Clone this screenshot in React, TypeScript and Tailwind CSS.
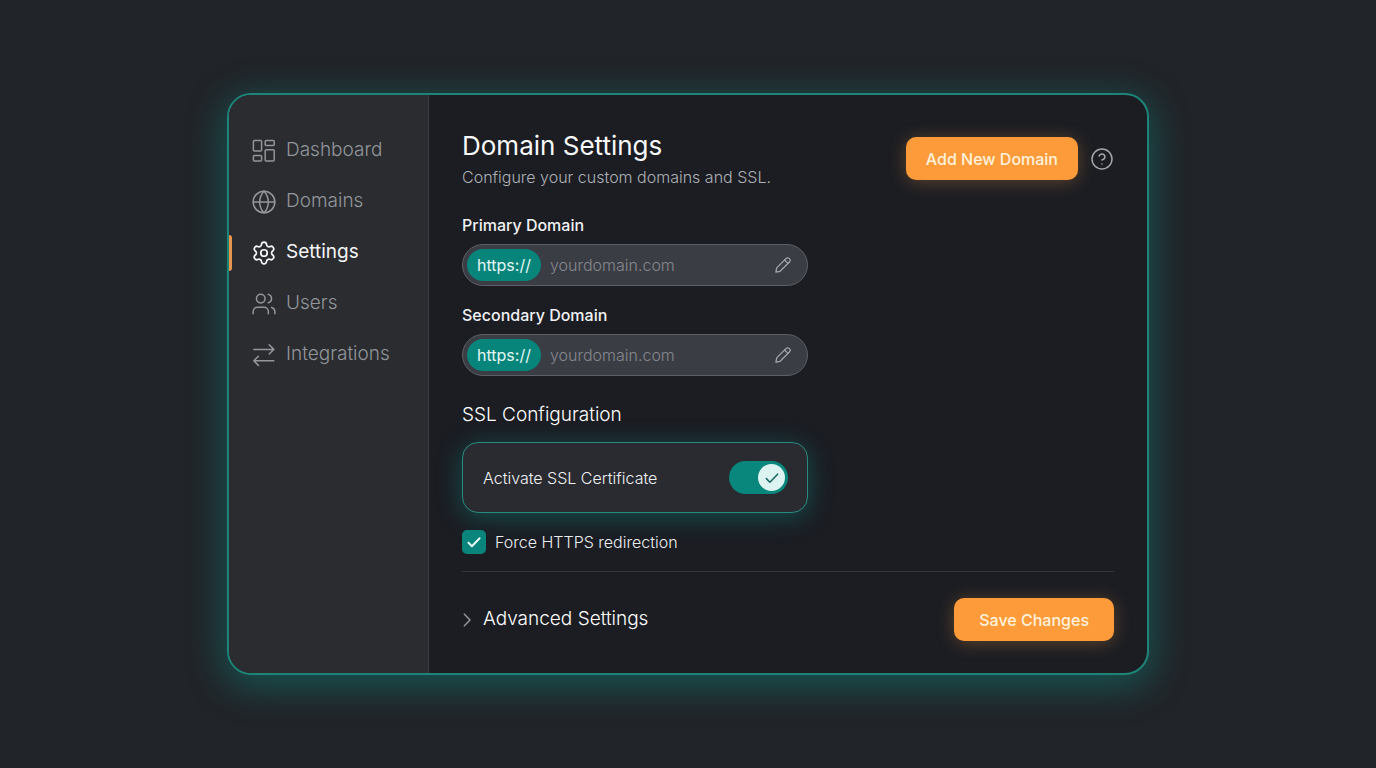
import { useState, type ReactNode } from "react";
import { CircleHelp, Globe, Settings, Users } from "lucide-react";

interface IconProps {
  className?: string;
}

function DashboardIcon({ className }: IconProps) {
  return (
    <svg viewBox="0 0 26 26" fill="none" stroke="currentColor" strokeWidth={1.5} className={className} aria-hidden="true">
      <rect x="2.4" y="2.4" width="8.2" height="10.6" rx="1" />
      <rect x="14.2" y="2.4" width="9" height="5.2" rx="1" />
      <rect x="14.2" y="11.8" width="9" height="11.2" rx="1" />
      <rect x="2.4" y="17.4" width="8.2" height="5.6" rx="1" />
    </svg>
  );
}

function TransferIcon({ className }: IconProps) {
  return (
    <svg
      viewBox="0 0 26 26"
      fill="none"
      stroke="currentColor"
      strokeWidth={1.5}
      strokeLinecap="round"
      strokeLinejoin="round"
      className={className}
      aria-hidden="true"
    >
      <path d="M2.8 7.4h20M18.2 2.8l4.6 4.6-4.6 4.6" />
      <path d="M22.8 18.8h-20M7.4 14.2l-4.6 4.6 4.6 4.6" />
    </svg>
  );
}

function PencilIcon({ className }: IconProps) {
  return (
    <svg
      viewBox="0 0 18 18"
      fill="none"
      stroke="currentColor"
      strokeWidth={1.3}
      strokeLinecap="round"
      strokeLinejoin="round"
      className={className}
      aria-hidden="true"
    >
      <path d="M1.9 16.1l.8-4.2L12.2 2.4a2.05 2.05 0 0 1 2.9 0l.5.5a2.05 2.05 0 0 1 0 2.900L6.1 15.300z" />
      <path d="M10.6 4l3.4 3.4" />
    </svg>
  );
}

function CheckIcon({ className }: IconProps) {
  return (
    <svg
      viewBox="0 0 16 16"
      fill="none"
      stroke="currentColor"
      strokeLinecap="round"
      strokeLinejoin="round"
      className={className}
      aria-hidden="true"
    >
      <path d="M2.4 8.6l3.5 3.6 7.7-8" />
    </svg>
  );
}

const navItems = [
  { label: "Dashboard", icon: <DashboardIcon className="size-[26px]" /> },
  { label: "Domains", icon: <Globe className="size-[26px]" strokeWidth={1.4} /> },
  { label: "Settings", icon: <Settings className="size-[26px]" strokeWidth={1.6} />, active: true },
  { label: "Users", icon: <Users className="size-[26px]" strokeWidth={1.4} /> },
  { label: "Integrations", icon: <TransferIcon className="size-[26px]" /> },
];

interface DomainFieldProps {
  id: string;
  label: string;
}

function DomainField({ id, label }: DomainFieldProps) {
  const [value, setValue] = useState("");

  return (
    <div className="flex flex-col gap-[7px]">
      <label htmlFor={id} className="text-base leading-6 font-medium text-[#f1f2f4]">
        {label}
      </label>

      <div className="flex h-[42px] items-center rounded-full border border-[#5c5f66] bg-[#3b3d45] pr-[15px] pl-1">
        <span className="flex h-8 items-center rounded-full bg-[#07857b] px-[10px] text-base text-[#e6f6f4]">
          https://
        </span>
        <input
          id={id}
          type="text"
          value={value}
          onChange={(e) => setValue(e.target.value)}
          placeholder="yourdomain.com"
          className="min-w-0 flex-1 bg-transparent px-[9px] text-base font-light text-white outline-none placeholder:text-[#85878e]"
        />
        <button type="button" aria-label={"Edit " + label} className="text-[#a3a5ab]">
          <PencilIcon className="size-[18px]" />
        </button>
      </div>
    </div>
  );
}

interface PrimaryButtonProps {
  children: ReactNode;
  wide?: boolean;
}

function PrimaryButton({ children, wide }: PrimaryButtonProps) {
  return (
    <button
      type="button"
      className={
        "h-[43px] rounded-[10px] bg-[#fd9a3a] text-base font-medium text-[#fff3dc] shadow-[0_2px_18px_rgba(253,154,58,0.3)] transition hover:bg-[#ffa54e] " +
        (wide ? "px-[25px]" : "px-5")
      }
    >
      {children}
    </button>
  );
}

export default function App() {
  const [ssl, setSsl] = useState(true);
  const [force, setForce] = useState(true);

  return (
    <div className="flex min-h-screen items-center justify-center bg-[#212429] p-6 font-['Inter','Liberation_Sans',sans-serif]">
      <div className="flex w-full max-w-[922px] overflow-hidden rounded-3xl border-2 border-[#1f8478] bg-[#1b1d23] shadow-[0_8px_36px_4px_rgba(13,148,136,0.42)]">

        {/* Sidebar */}
        <nav className="w-[200px] shrink-0 border-r border-[#3a3d42] bg-[#2a2c30] pt-[30px]">
          <ul>
            {navItems.map((item) => (
              <li key={item.label} className="flex h-[51px] items-center">
                <span className={item.active ? "h-9 w-[3px] rounded-r-sm bg-[#e8964a]" : "h-9 w-[3px]"} />
                <a
                  href="#"
                  aria-current={item.active ? "page" : undefined}
                  className={
                    item.active
                      ? "flex items-center gap-[9px] pl-[19px] text-[19px] text-[#f5f6f7]"
                      : "flex items-center gap-[9px] pl-[19px] text-[19px] font-light text-[#92959a] hover:text-white"
                  }
                >
                  {item.icon}
                  {item.label}
                </a>
              </li>
            ))}
          </ul>
        </nav>

        <main className="min-w-0 flex-1 px-[33px] pt-[35px] pb-8">

          {/* Header */}
          <header className="flex items-start justify-between">
            <div>
              <h1 className="text-[26px] leading-8 text-[#f7f8f9]">Domain Settings</h1>
              <p className="mt-[3px] text-base leading-6 font-light text-[#aeb1b6]">
                Configure your custom domains and SSL.
              </p>
            </div>

            <div className="mt-[7px] flex items-center gap-3">
              <PrimaryButton>Add New Domain</PrimaryButton>
              <button type="button" aria-label="Help" className="text-[#a3a5aa]">
                <CircleHelp className="size-6" strokeWidth={1.5} />
              </button>
            </div>
          </header>

          {/* Domains */}
          <div className="mt-6 flex max-w-[346px] flex-col gap-[17px]">
            <DomainField id="primary-domain" label="Primary Domain" />
            <DomainField id="secondary-domain" label="Secondary Domain" />
          </div>

          {/* SSL */}
          <section className="mt-[25px] max-w-[346px]">
            <h2 className="text-[19px] leading-7 font-light text-white">SSL Configuration</h2>

            <label className="mt-[13px] flex h-[71px] items-center justify-between rounded-2xl border border-[#2a8a7f] bg-[#292b30] pr-[19px] pl-5 text-base font-light text-[#f0f1f3] shadow-[0_4px_24px_rgba(13,148,136,0.42)]">
              Activate SSL Certificate
              <span className="relative flex">
                <input
                  type="checkbox"
                  role="switch"
                  checked={ssl}
                  onChange={(e) => setSsl(e.target.checked)}
                  className="peer h-[33px] w-[59px] appearance-none rounded-full bg-[#4a4d54] checked:bg-[#0a877c]"
                />
                <span className="pointer-events-none absolute top-[3px] left-[3px] flex size-[27px] items-center justify-center rounded-full bg-[#dcf3f1] text-[#1c6a63] peer-checked:left-[29px]">
                  {ssl && <CheckIcon className="size-4 stroke-[1.6]" />}
                </span>
              </span>
            </label>

            <label className="mt-[17px] flex items-center gap-[9px] text-base font-light text-[#ebedf0]">
              <span className="relative flex">
                <input
                  type="checkbox"
                  checked={force}
                  onChange={(e) => setForce(e.target.checked)}
                  className="size-6 appearance-none rounded-[5px] bg-[#4a4d54] checked:bg-[#0a857b]"
                />
                {force && (
                  <CheckIcon className="pointer-events-none absolute top-1 left-1 size-4 stroke-2 text-[#e9faf8]" />
                )}
              </span>
              Force HTTPS redirection
            </label>
          </section>

          {/* Footer */}
          <div className="mt-[17px] flex items-center justify-between border-t border-[#32353b] pt-[26px]">
            <button type="button" className="flex items-center gap-[11px] text-[19px] font-light text-white">
              <svg viewBox="0 0 10 16" fill="none" stroke="#8d9096" strokeWidth={1.6} strokeLinecap="round" strokeLinejoin="round" className="h-4 w-[10px]" aria-hidden="true">
                <path d="M2.4 2.2L8 8l-5.6 5.8" />
              </svg>
              Advanced Settings
            </button>
            <PrimaryButton wide>Save Changes</PrimaryButton>
          </div>

        </main>
      </div>
    </div>
  );
}
